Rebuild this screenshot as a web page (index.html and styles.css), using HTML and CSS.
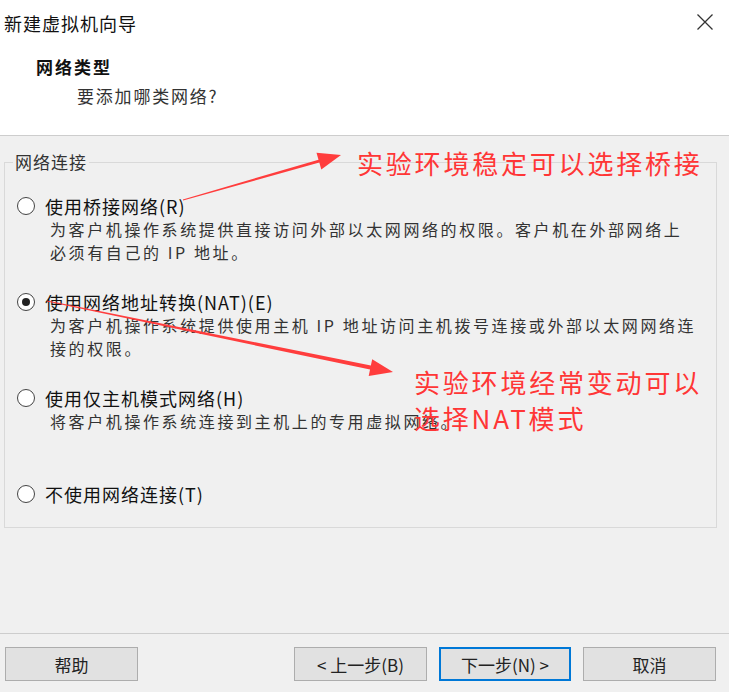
FILE: index.html
```html
<!DOCTYPE html>
<html lang="zh-CN">
<head>
<meta charset="utf-8">
<title>新建虚拟机向导</title>
<link rel="stylesheet" href="styles.css">
</head>
<body>
<div class="dialog">
  <header class="head">
    <div class="titlebar">
      <span class="title">新建虚拟机向导</span>
      <svg class="close" width="18" height="16" viewBox="0 0 18 16"><path d="M1.5 0.5 L16.5 15.5 M16.5 0.5 L1.5 15.5" stroke="#333" stroke-width="1.3" fill="none"/></svg>
    </div>
    <div class="heading">网络类型</div>
    <div class="subheading">要添加哪类网络?</div>
  </header>

  <main class="body">
    <fieldset class="group">
      <legend class="legend">网络连接</legend>
      <div class="option">
        <div class="opt-label"><span class="radio"></span>使用桥接网络(R)</div>
        <div class="opt-desc">为客户机操作系统提供直接访问外部以太网网络的权限。客户机在外部网络上<br>必须有自己的 IP 地址。</div>
      </div>
      <div class="option">
        <div class="opt-label"><span class="radio checked"></span>使用网络地址转换(NAT)(E)</div>
        <div class="opt-desc">为客户机操作系统提供使用主机 IP 地址访问主机拨号连接或外部以太网网络连<br>接的权限。</div>
      </div>
      <div class="option option-gap">
        <div class="opt-label"><span class="radio"></span>使用仅主机模式网络(H)</div>
        <div class="opt-desc">将客户机操作系统连接到主机上的专用虚拟网络。</div>
      </div>
      <div class="option last">
        <div class="opt-label"><span class="radio"></span>不使用网络连接(T)</div>
      </div>
    </fieldset>
  </main>

  <footer class="foot">
    <button class="btn">帮助</button>
    <button class="btn push">&lt; 上一步(B)</button>
    <button class="btn primary">下一步(N) &gt;</button>
    <button class="btn">取消</button>
  </footer>

  <svg class="arrows" width="729" height="692" viewBox="0 0 729 692">
    <polygon fill="#ff3d3d" points="182.9,199.4 318.5,159.7 316.5,152.8 341,155 321.3,169.4 319.3,162.5 183.1,200.6"/>
    <polygon fill="#ff3d3d" points="47.1,300.4 370.85,365.6 372.2,359.2 393,372 368.7,375.9 370.05,369.52 46.9,301.6"/>
  </svg>
  <div class="note note-1">实验环境稳定可以选择桥接</div>
  <div class="note note-2">实验环境经常变动可以<br>选择NAT模式</div>
</div>
</body>
</html>
```

FILE: styles.css
```css
* { box-sizing: border-box; }
html, body {
  margin: 0;
  padding: 0;
}
body {
  background: #f0f0f0;
  font-family: "Noto Sans CJK SC", "Noto Sans", sans-serif;
  color: #1a1a1a;
}
.dialog {
  position: relative;
  width: 729px;
  height: 692px;
  display: flex;
  flex-direction: column;
  background: #f0f0f0;
  overflow: hidden;
}
.head {
  height: 136px;
  background: #ffffff;
  border-bottom: 1px solid #cdcdcd;
  padding-top: 11px;
}
.titlebar {
  display: flex;
  align-items: center;
  justify-content: space-between;
  height: 24px;
  padding-left: 4px;
  padding-right: 15px;
}
.title {
  font-size: 18px;
  line-height: 24px;
  letter-spacing: 1px;
  color: #111;
}
.close { display: block; margin-top: -3px; }
.heading {
  margin-top: 20px;
  padding-left: 36px;
  font-size: 17px;
  font-weight: bold;
  line-height: 24px;
  letter-spacing: 2px;
  color: #111;
}
.subheading {
  margin-top: 5px;
  padding-left: 77px;
  font-size: 17px;
  line-height: 24px;
  letter-spacing: 1.8px;
  color: #333;
}
.body {
  padding: 16px 12px 0 4px;
}
.group {
  margin: 0;
  padding: 22px 0 21px 13px;
  border: 1px solid #d9d9d9;
  min-width: 0;
}
.legend {
  margin-left: -5px;
  padding: 0 2px;
  font-size: 17px;
  line-height: 20px;
  letter-spacing: 1px;
  color: #333;
}
.option { margin-bottom: 26px; }
.option-gap { margin-bottom: 49px; }
.option.last { margin-bottom: 0; }
.opt-label {
  display: flex;
  align-items: center;
  height: 24px;
  font-size: 18px;
  line-height: 24px;
  letter-spacing: 1px;
  color: #111;
  white-space: nowrap;
}
.radio {
  position: relative;
  width: 18px;
  height: 18px;
  flex: none;
  margin-left: -1px;
  margin-right: 10px;
  border: 1.5px solid #444;
  border-radius: 50%;
  background: #fff;
}
.radio.checked::after {
  content: "";
  position: absolute;
  left: 3.5px;
  top: 3.5px;
  width: 8px;
  height: 8px;
  border-radius: 50%;
  background: #222;
}
.opt-desc {
  padding-left: 32px;
  font-size: 16px;
  line-height: 23px;
  letter-spacing: 2.6px;
  color: #333;
  white-space: nowrap;
}
.foot {
  margin-top: auto;
  height: 59px;
  border-top: 1px solid #cdcdcd;
  padding: 13px 13px 11px 5px;
  display: flex;
  gap: 12px;
}
.btn {
  width: 133px;
  height: 34px;
  background: #e1e1e1;
  border: 1px solid #adadad;
  font-family: "Noto Sans CJK SC", "Noto Sans", sans-serif;
  font-size: 17px;
  color: #222;
  padding: 0;
}
.push { margin-left: auto; }
.primary {
  border: 2px solid #0078d7;
  width: 132px;
}
.arrows {
  position: absolute;
  left: 0;
  top: 0;
  pointer-events: none;
}
.note {
  position: absolute;
  font-size: 26px;
  letter-spacing: 2.8px;
  color: #ff3636;
  white-space: nowrap;
}
.note-1 {
  left: 357px;
  top: 146px;
  line-height: 34px;
}
.note-2 {
  left: 414px;
  top: 364px;
  line-height: 36px;
}
```
